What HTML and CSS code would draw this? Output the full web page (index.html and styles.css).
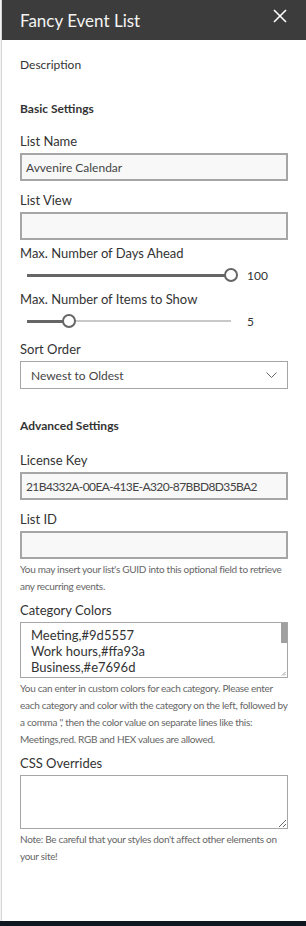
FILE: index.html
```html
<!DOCTYPE html>
<html lang="en">
<head>
    <meta charset="UTF-8">
    <meta name="viewport" content="width=device-width, initial-scale=1.0">
    <title>Fancy Event List - Settings</title>
    <link rel="stylesheet" href="styles.css">
</head>
<body>
    <div class="screen">
        <div class="page-edge"></div>
        <aside class="panel">
            <header class="panel-header">
                <h1 class="panel-title">Fancy Event List</h1>
                <button class="close-button" aria-label="Close">
                    <svg viewBox="0 0 14 14" fill="none" stroke="currentColor" stroke-width="1.6">
                        <line x1="1" y1="1" x2="13" y2="13"></line>
                        <line x1="13" y1="1" x2="1" y2="13"></line>
                    </svg>
                </button>
            </header>

            <div class="panel-body">
                <p class="description">Description</p>

                <h2 class="group-title">Basic Settings</h2>

                <div class="field field--first">
                    <label class="field-label" for="listName">List Name</label>
                    <input type="text" id="listName" class="text-input" value="Avvenire Calendar">
                </div>

                <div class="field">
                    <label class="field-label" for="listView">List View</label>
                    <input type="text" id="listView" class="text-input" value="">
                </div>

                <div class="field field--slider">
                    <span class="field-label">Max. Number of Days Ahead</span>
                    <div class="slider">
                        <div class="slider-track">
                            <div class="slider-fill" style="width: 100%;"></div>
                            <div class="slider-thumb" style="left: 100%;"></div>
                        </div>
                        <span class="slider-value">100</span>
                    </div>
                </div>

                <div class="field field--slider">
                    <span class="field-label">Max. Number of Items to Show</span>
                    <div class="slider">
                        <div class="slider-track">
                            <div class="slider-fill" style="width: 20.6%;"></div>
                            <div class="slider-thumb" style="left: 20.6%;"></div>
                        </div>
                        <span class="slider-value">5</span>
                    </div>
                </div>

                <div class="field field--after-slider">
                    <span class="field-label">Sort Order</span>
                    <div class="dropdown">
                        <span class="dropdown-text">Newest to Oldest</span>
                        <svg class="dropdown-chevron" viewBox="0 0 11 6" fill="none" stroke="currentColor" stroke-width="1">
                            <polyline points="0.5 0.5 5.5 5.5 10.5 0.5"></polyline>
                        </svg>
                    </div>
                </div>

                <h2 class="group-title group-title--advanced">Advanced Settings</h2>

                <div class="field field--first-advanced">
                    <label class="field-label" for="licenseKey">License Key</label>
                    <input type="text" id="licenseKey" class="text-input text-input--key" value="21B4332A-00EA-413E-A320-87BBD8D35BA2">
                </div>

                <div class="field">
                    <label class="field-label" for="listId">List ID</label>
                    <input type="text" id="listId" class="text-input" value="">
                    <p class="help-text">You may insert your list's GUID into this optional field to retrieve any recurring events.</p>
                </div>

                <div class="field field--compact">
                    <span class="field-label">Category Colors</span>
                    <div class="color-box">
                        <div class="color-lines">Meeting,#9d5557
Work hours,#ffa93a
Business,#e7696d</div>
                        <div class="color-scroll">
                            <div class="color-scroll-thumb"></div>
                            <svg class="color-grip" viewBox="0 0 5 5" fill="none" stroke="#8a8a8a" stroke-width="0.8">
                                <line x1="4.5" y1="1" x2="1" y2="4.5"></line>
                                <line x1="4.5" y1="3" x2="3" y2="4.5"></line>
                            </svg>
                        </div>
                    </div>
                    <p class="help-text">You can enter in custom colors for each category. Please enter each category and color with the category on the left, followed by a comma ',' then the color value on separate lines like this: Meetings,red. RGB and HEX values are allowed.</p>
                </div>

                <div class="field field--compact">
                    <label class="field-label" for="cssOverrides">CSS Overrides</label>
                    <textarea id="cssOverrides" class="text-area"></textarea>
                    <p class="help-text">Note: Be careful that your styles don't affect other elements on your site!</p>
                </div>
            </div>
        </aside>
    </div>
    <div class="taskbar"></div>
</body>
</html>
```

FILE: styles.css
```css
:root {
    --header-color: #3c3c3c;
    --text-color: #333;
    --input-text: #444;
    --muted-color: #666;
    --border-color: #a6a6a6;
    --slider-color: #666;
    --slider-rest: #c8c8c8;
}

* {
    box-sizing: border-box;
}

body {
    margin: 0;
    font-family: Lato, "Segoe UI", "Noto Sans", sans-serif;
    color: var(--text-color);
    background-color: #fff;
}

.screen {
    display: flex;
    height: 921px;
}

.page-edge {
    width: 2px;
    background-color: #f3f3f3;
    border-right: 1px solid #d6d6d6;
}

.panel {
    flex: 1;
    display: flex;
    flex-direction: column;
    background-color: #fff;
}

.panel-header {
    height: 40px;
    display: flex;
    justify-content: space-between;
    align-items: center;
    padding: 0 19px 0 18px;
    background-color: var(--header-color);
}

.panel-title {
    margin: 0;
    font-size: 17px;
    font-weight: 400;
    color: #f4f4f4;
}

.close-button {
    align-self: flex-start;
    margin-top: 9px;
    width: 14px;
    height: 14px;
    padding: 0;
    border: none;
    background: none;
    color: #fff;
    cursor: pointer;
}

.close-button svg {
    display: block;
    width: 14px;
    height: 14px;
}

.panel-body {
    padding: 15px 18px 0 18px;
}

.description {
    margin: 0;
    font-size: 12px;
    line-height: 20px;
}

.group-title {
    margin: 24px 0 0;
    font-size: 12px;
    font-weight: 700;
    line-height: 20px;
}

.group-title--advanced {
    margin-top: 27px;
}

.field {
    margin-top: 9px;
}

.field--first {
    margin-top: 12px;
}

.field--first-advanced {
    margin-top: 14px;
}

.field--slider {
    margin-top: 3px;
}

.field--after-slider {
    margin-top: 8px;
}

.field--compact {
    margin-top: 5px;
}

.field-label {
    display: block;
    margin-bottom: 2px;
    font-size: 13px;
    font-weight: 400;
    line-height: 20px;
}

.text-input {
    display: block;
    width: 100%;
    height: 28px;
    padding: 0 4px;
    border: 2px solid var(--border-color);
    background-color: #f8f8f8;
    font-family: inherit;
    font-size: 12px;
    color: var(--input-text);
}

.text-input--key {
    letter-spacing: -0.6px;
}

.slider {
    display: flex;
    align-items: center;
    height: 20px;
    margin-bottom: 4px;
    padding-left: 7px;
}

.slider-track {
    position: relative;
    width: 204px;
    height: 2px;
    background-color: var(--slider-rest);
}

.slider-fill {
    height: 3px;
    margin-top: -0.5px;
    background-color: var(--slider-color);
}

.slider-thumb {
    position: absolute;
    top: 50%;
    width: 14px;
    height: 14px;
    border: 2px solid var(--slider-color);
    border-radius: 50%;
    background-color: #fff;
    transform: translate(-50%, -50%);
}

.slider-value {
    margin-left: 16px;
    font-size: 12px;
}

.dropdown {
    display: flex;
    justify-content: space-between;
    align-items: center;
    height: 28px;
    padding: 0 10px;
    border: 1px solid var(--border-color);
    background-color: #fff;
    font-size: 12px;
    color: var(--input-text);
}

.dropdown-chevron {
    width: 11px;
    height: 6px;
    color: var(--muted-color);
}

.color-box {
    display: flex;
    height: 56px;
    border: 1px solid var(--border-color);
    overflow: hidden;
}

.color-lines {
    flex: 1;
    padding: 4px 10px 0;
    font-size: 13px;
    line-height: 16px;
    white-space: pre;
    overflow: hidden;
}

.color-scroll {
    width: 6px;
    display: flex;
    flex-direction: column;
    justify-content: space-between;
}

.color-scroll-thumb {
    height: 20px;
    background-color: #a0a0a0;
}

.color-grip {
    width: 5px;
    height: 5px;
    margin-bottom: 1px;
}

.text-area {
    display: block;
    width: 100%;
    height: 54px;
    margin: 0;
    border: 1px solid var(--border-color);
    background-color: #fff;
    font-family: inherit;
    color: var(--text-color);
    resize: vertical;
}

.help-text {
    margin: 2px 0 0;
    font-size: 10px;
    line-height: 17px;
    letter-spacing: -0.3px;
    color: var(--muted-color);
}

.taskbar {
    height: 5px;
    background-color: #101720;
}
```
